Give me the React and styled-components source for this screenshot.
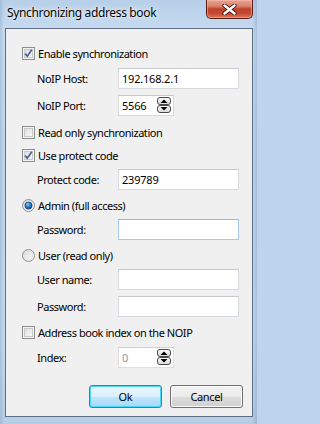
import React from "react";
import styled, { createGlobalStyle } from "styled-components";

const Global = createGlobalStyle`
  html, body { margin: 0; padding: 0; background: #bcd4ec; }
  body { font-family: "Noto Sans", "DejaVu Sans", sans-serif; }
`;

const Frame = styled.div`
  width: 257px;
  height: 424px;
  box-sizing: border-box;
  display: flex;
  flex-direction: column;
  background:
    linear-gradient(to right, rgba(120,150,185,0.35) 0px, rgba(255,255,255,0) 4px, rgba(255,255,255,0) 252px, rgba(110,140,175,0.35) 257px),
    linear-gradient(to bottom, #b7cfe8 0%, #c8dcf1 8%, #bfd6ee 40%, #c4daf0 80%, #b6cde6 100%);
`;

const TitleBar = styled.div`
  height: 28px;
  display: flex;
  align-items: flex-start;
  padding-left: 7px;
  padding-right: 4px;
  flex-shrink: 0;
`;

const Title = styled.div`
  font-size: 12px;
  letter-spacing: -0.35px;
  color: #000;
  line-height: 16px;
  margin-top: 5px;
  text-shadow: 0 0 6px rgba(255,255,255,0.9), 0 0 2px rgba(255,255,255,0.9);
  flex: 1;
`;

const CloseButton = styled.div`
  width: 47px;
  height: 19px;
  box-sizing: border-box;
  border: 1px solid #5b1c14;
  border-top: none;
  border-radius: 0 0 5px 5px;
  background: linear-gradient(to bottom, #e8a493 0%, #d8826d 35%, #c0402a 50%, #c64a32 75%, #d87a5e 100%);
  box-shadow: inset 0 0 0 1px rgba(255,200,180,0.45);
  display: flex;
  align-items: center;
  justify-content: center;
`;

const Client = styled.div`
  margin: 0 4px 7px 5px;
  flex: 1;
  background: #f0f0f0;
  border: 1px solid #5f6e80;
  display: flex;
  flex-direction: column;
`;

const CheckRow = styled.label`
  display: flex;
  align-items: center;
  height: 16px;
  margin-top: ${(p) => p.$mt}px;
  padding-left: 16px;
  font-size: 11px;
  letter-spacing: -0.45px;
  color: #000;
  svg { flex-shrink: 0; margin-right: 3px; }
`;

const FieldRow = styled.div`
  display: flex;
  align-items: center;
  height: 21px;
  margin-top: ${(p) => p.$mt}px;
  padding-left: 31px;
`;

const Label = styled.div`
  width: 81px;
  font-size: 11px;
  letter-spacing: -0.45px;
  color: #000;
`;

const TextBox = styled.div`
  width: ${(p) => p.$w}px;
  height: 21px;
  box-sizing: border-box;
  background: #fff;
  border: 1px solid ${(p) => (p.$focus ? "#a9c9ea" : p.$disabled ? "#dedede" : "#d6d9de")};
  border-top-color: ${(p) => (p.$focus ? "#93b8e0" : p.$disabled ? "#d0d0d0" : "#c4c7cc")};
  padding-left: 3px;
  display: flex;
  align-items: center;
  font-size: 11px;
  letter-spacing: -0.2px;
  color: ${(p) => (p.$disabled ? "#8a97a8" : "#000")};
  position: relative;
`;

const SpinCol = styled.div`
  position: absolute;
  right: 2px;
  top: 1px;
  display: flex;
  flex-direction: column;
`;

const SpinBtn = styled.div`
  width: 14px;
  height: 8px;
  box-sizing: border-box;
  border: 1px solid #4a4a4a;
  border-radius: 3px;
  background: linear-gradient(to bottom, #fbfbfb, #dcdcdc);
  display: flex;
  align-items: center;
  justify-content: center;
`;

const ButtonRow = styled.div`
  display: flex;
  justify-content: flex-end;
  gap: 8px;
  margin-top: 17px;
  padding-right: 9px;
`;

const Button = styled.div`
  width: 73px;
  height: 23px;
  box-sizing: border-box;
  border: 1px solid ${(p) => (p.$default ? "#3c7fb1" : "#707070")};
  border-radius: 3px;
  background: ${(p) =>
    p.$default
      ? "linear-gradient(to bottom, #eaf6fd 0%, #d9f0fc 50%, #bee6fd 51%, #a7d9f5 100%)"
      : "linear-gradient(to bottom, #f2f2f2 0%, #ebebeb 50%, #dddddd 51%, #cfcfcf 100%)"};
  box-shadow: inset 0 0 0 1px ${(p) => (p.$default ? "#48d8fb" : "#fcfcfc")};
  display: flex;
  align-items: center;
  justify-content: center;
  font-size: 11px;
  letter-spacing: -0.35px;
  color: #000;
`;

const CheckBox = ({ checked }) => (
  <svg width="13" height="13" viewBox="0 0 13 13">
    <defs>
      <linearGradient id="cbg" x1="0" y1="0" x2="1" y2="1">
        <stop offset="0" stopColor="#dcdcdc" />
        <stop offset="1" stopColor="#fbfbfb" />
      </linearGradient>
    </defs>
    <rect x="0.5" y="0.5" width="12" height="12" fill="#f4f4f4" stroke="#8e8f8f" />
    <rect x="2.5" y="2.5" width="8" height="8" fill="url(#cbg)" stroke="#c9c9c9" />
    {checked && (
      <path d="M3.2 6.6 L5.3 9.2 L9.8 2.8" fill="none" stroke="#46609e" strokeWidth="1.7" />
    )}
  </svg>
);

const Radio = ({ checked }) => (
  <svg width="13" height="13" viewBox="0 0 13 13">
    <defs>
      <linearGradient id="rbg" x1="0" y1="0" x2="1" y2="1">
        <stop offset="0" stopColor="#d8d8d8" />
        <stop offset="1" stopColor="#fdfdfd" />
      </linearGradient>
      <radialGradient id="rdot" cx="0.4" cy="0.35" r="0.7">
        <stop offset="0" stopColor="#8fd3ff" />
        <stop offset="0.45" stopColor="#2b84c8" />
        <stop offset="1" stopColor="#0b3d74" />
      </radialGradient>
    </defs>
    <circle cx="6.5" cy="6.5" r="6" fill="url(#rbg)" stroke="#8e8f8f" />
    <circle cx="6.5" cy="6.5" r="4.3" fill="none" stroke="#e4e4e4" />
    {checked && <circle cx="6.5" cy="6.5" r="3.6" fill="url(#rdot)" stroke="#173f6d" strokeWidth="0.7" />}
  </svg>
);

const Up = () => (
  <svg width="8" height="4" viewBox="0 0 8 4">
    <path d="M0.5 4 L4 0.5 L7.5 4 Z" fill="#000" />
  </svg>
);
const Down = () => (
  <svg width="8" height="4" viewBox="0 0 8 4">
    <path d="M0.5 0 L4 3.5 L7.5 0 Z" fill="#000" />
  </svg>
);

const Spin = () => (
  <SpinCol>
    <SpinBtn><Up /></SpinBtn>
    <SpinBtn><Down /></SpinBtn>
  </SpinCol>
);

const CloseX = () => (
  <svg width="15" height="11" viewBox="0 0 15 11">
    <path d="M2.5 1.5 L12.5 9.5 M12.5 1.5 L2.5 9.5" stroke="#4a150e" strokeWidth="4.2" strokeLinecap="round" />
    <path d="M2.5 1.5 L12.5 9.5 M12.5 1.5 L2.5 9.5" stroke="#ffffff" strokeWidth="2.4" strokeLinecap="round" />
  </svg>
);

export default function App() {
  return (
    <>
      <Global />
      <Frame>
        <TitleBar>
          <Title>Synchronizing address book</Title>
          <CloseButton><CloseX /></CloseButton>
        </TitleBar>
        <Client>
          <CheckRow $mt={16}><CheckBox checked />Enable synchronization</CheckRow>
          <FieldRow $mt={7}><Label>NoIP Host:</Label><TextBox $w={121}>192.168.2.1</TextBox></FieldRow>
          <FieldRow $mt={6}><Label>NoIP Port:</Label><TextBox $w={56}>5566<Spin /></TextBox></FieldRow>
          <CheckRow $mt={8}><CheckBox />Read only synchronization</CheckRow>
          <CheckRow $mt={7}><CheckBox checked />Use protect code</CheckRow>
          <FieldRow $mt={6}><Label>Protect code:</Label><TextBox $w={121}>239789</TextBox></FieldRow>
          <CheckRow $mt={7}><Radio checked />Admin (full access)</CheckRow>
          <FieldRow $mt={6}><Label>Password:</Label><TextBox $w={121} $focus /></FieldRow>
          <CheckRow $mt={7}><Radio />User (read only)</CheckRow>
          <FieldRow $mt={6}><Label>User name:</Label><TextBox $w={121} /></FieldRow>
          <FieldRow $mt={6}><Label>Password:</Label><TextBox $w={121} /></FieldRow>
          <CheckRow $mt={7}><CheckBox />Address book index on the NOIP</CheckRow>
          <FieldRow $mt={7}><Label>Index:</Label><TextBox $w={56} $disabled>0<Spin /></TextBox></FieldRow>
          <ButtonRow>
            <Button $default>Ok</Button>
            <Button>Cancel</Button>
          </ButtonRow>
        </Client>
      </Frame>
    </>
  );
}
